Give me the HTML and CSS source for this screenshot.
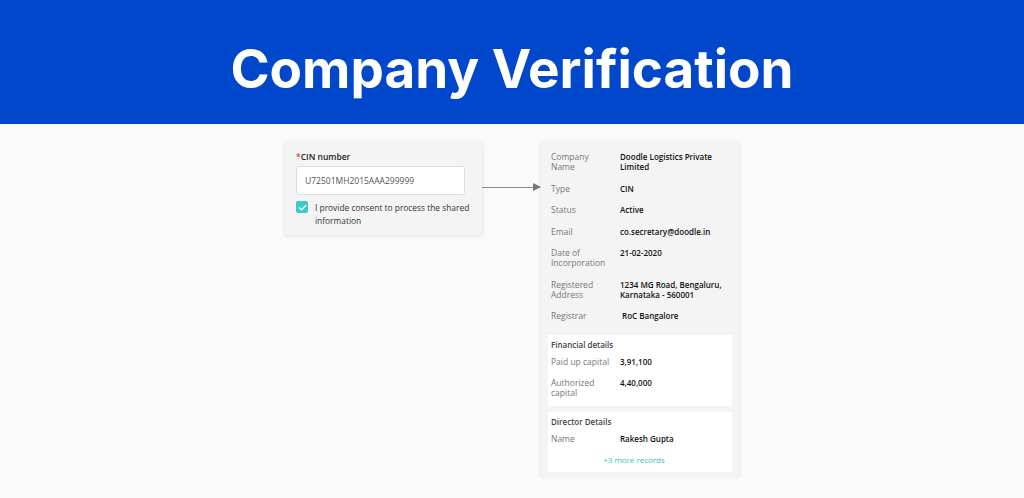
FILE: index.html
```html
<!DOCTYPE html>
<html lang="en">
<head>
    <meta charset="UTF-8">
    <meta name="viewport" content="width=device-width, initial-scale=1.0">
    <title>Company Verification</title>
    <link rel="stylesheet" href="styles.css">
</head>
<body>
    <header class="banner">
        <h1>Company Verification</h1>
    </header>

    <main class="flow">
        <div class="card input-card">
            <label class="field-label" for="cin"><span class="req">*</span>CIN number</label>
            <div class="field" id="cin">U72501MH2015AAA299999</div>
            <div class="consent">
                <span class="check">
                    <svg width="9" height="7" viewBox="0 0 9 7"><path d="M1 3.6 L3.4 5.8 L8 1.2" fill="none" stroke="#fff" stroke-width="1.4"/></svg>
                </span>
                <span class="consent-text">I provide consent to process the shared information</span>
            </div>
        </div>

        <div class="connector">
            <span class="line"></span>
            <span class="head"></span>
        </div>

        <div class="card result-card">
            <div class="row"><span class="key">Company<br>Name</span><span class="val">Doodle Logistics Private Limited</span></div>
            <div class="row"><span class="key">Type</span><span class="val">CIN</span></div>
            <div class="row"><span class="key">Status</span><span class="val">Active</span></div>
            <div class="row"><span class="key">Email</span><span class="val">co.secretary@doodle.in</span></div>
            <div class="row"><span class="key">Date of<br>Incorporation</span><span class="val">21-02-2020</span></div>
            <div class="row"><span class="key">Registered<br>Address</span><span class="val">1234 MG Road, Bengaluru, Karnataka - 560001</span></div>
            <div class="row last"><span class="key">Registrar</span><span class="val">&nbsp;RoC Bangalore</span></div>

            <div class="box">
                <div class="box-title">Financial details</div>
                <div class="row tight"><span class="key">Paid up capital</span><span class="val">3,91,100</span></div>
                <div class="row tight"><span class="key">Authorized<br>capital</span><span class="val">4,40,000</span></div>
            </div>

            <div class="box">
                <div class="box-title">Director Details</div>
                <div class="row tight"><span class="key">Name</span><span class="val">Rakesh Gupta</span></div>
                <div class="more">+3 more records</div>
            </div>
        </div>
    </main>
</body>
</html>
```

FILE: styles.css
```css
body {
    margin: 0;
    background-color: #fafafa;
    font-family: "Open Sans", "Noto Sans", sans-serif;
    color: #222;
}

.banner {
    background-color: #0047cc;
    height: 124px;
    box-sizing: border-box;
    padding-top: 14px;
    display: flex;
    align-items: center;
    justify-content: center;
}

.banner h1 {
    margin: 0;
    color: #fff;
    font-family: Inter, "Open Sans", sans-serif;
    font-weight: 700;
    font-size: 53px;
    letter-spacing: 0;
}

.flow {
    display: flex;
    justify-content: center;
    align-items: flex-start;
    padding-top: 18px;
}

.card {
    background-color: #f4f4f4;
    border-radius: 3px;
    box-shadow: 0 1px 4px rgba(0, 0, 0, 0.12);
}

.input-card {
    width: 197px;
    box-sizing: border-box;
    padding: 9px 17px 8px 11px;
}

.field-label {
    display: block;
    font-size: 8.5px;
    font-weight: 600;
    color: #222;
    margin-bottom: 4px;
}

.req {
    color: #e0453a;
}

.field {
    background-color: #fff;
    border: 1px solid #ddd;
    border-radius: 3px;
    height: 29px;
    box-sizing: border-box;
    padding: 0 8px;
    display: flex;
    align-items: center;
    font-size: 8.5px;
    color: #555;
}

.consent {
    display: flex;
    gap: 7px;
    margin-top: 6px;
    margin-right: -13px;
}

.check {
    flex: none;
    width: 12px;
    height: 12px;
    border-radius: 2px;
    background-color: #3cc9c9;
    display: flex;
    align-items: center;
    justify-content: center;
}

.consent-text {
    font-size: 8.4px;
    line-height: 13px;
    color: #333;
}

.connector {
    width: 59px;
    margin-top: 41px;
    display: flex;
    align-items: center;
}

.line {
    flex: 1;
    height: 1px;
    background-color: #888;
}

.head {
    width: 0;
    height: 0;
    border-top: 4px solid transparent;
    border-bottom: 4px solid transparent;
    border-left: 8px solid #777;
}

.result-card {
    width: 198px;
    box-sizing: border-box;
    padding: 10px 7px 6px;
}

.row {
    display: flex;
    font-size: 8px;
    line-height: 10px;
    padding: 0 3px;
    margin-bottom: 11.5px;
}

.row.last {
    margin-bottom: 14px;
}

.key {
    width: 69px;
    flex: none;
    color: #777;
    font-size: 8.5px;
}

.val {
    font-weight: 600;
    color: #111;
}

.box {
    background-color: #fff;
    padding: 5px 0 7.5px;
    margin-bottom: 6px;
}

.box:last-child {
    margin-bottom: 0;
}

.box-title {
    font-size: 8px;
    line-height: 10px;
    font-weight: 600;
    color: #444;
    padding: 0 3px;
    margin-bottom: 7px;
}

.row.tight {
    margin-bottom: 11px;
}

.row.tight:last-child {
    margin-bottom: 0;
}

.more {
    text-align: center;
    font-size: 8px;
    line-height: 10px;
    color: #32c0c0;
    padding-right: 12px;
}
```
